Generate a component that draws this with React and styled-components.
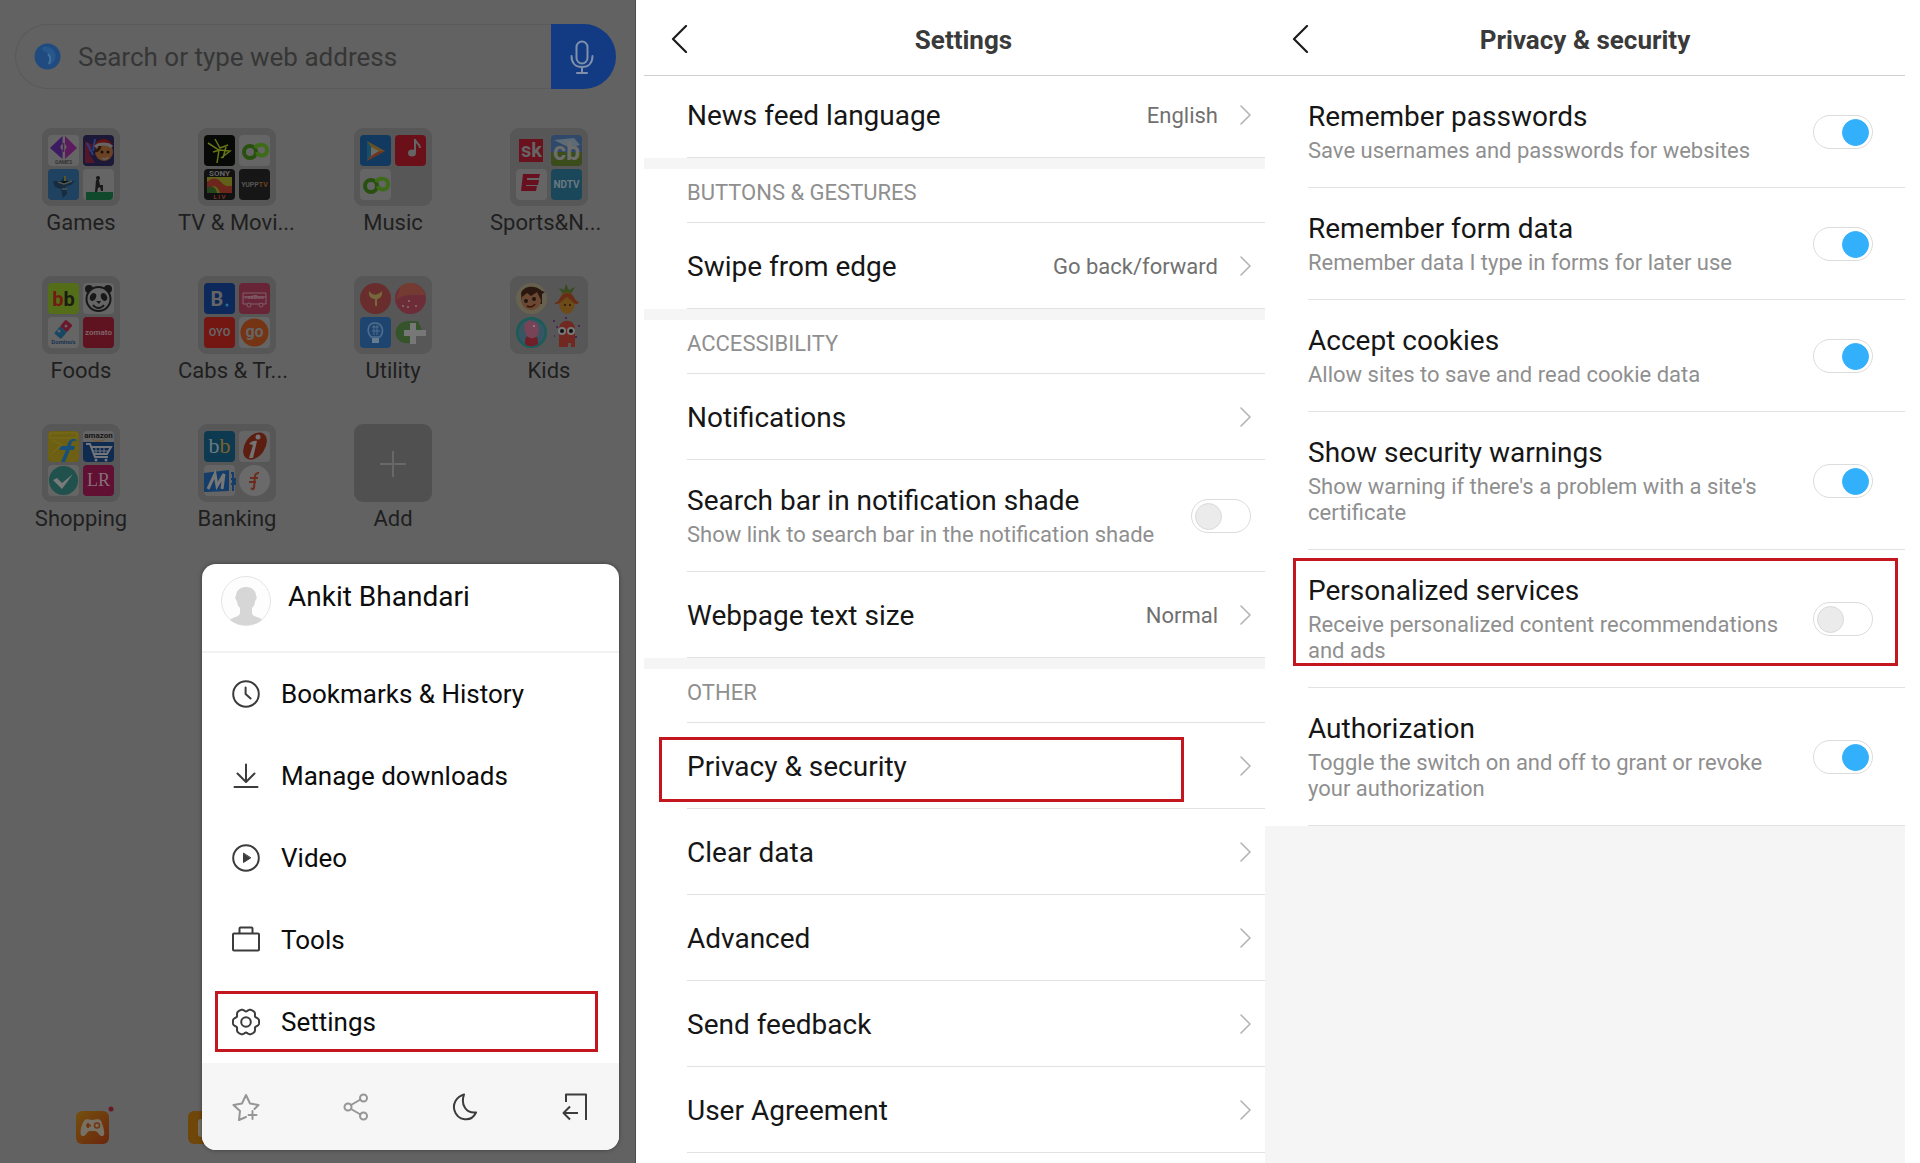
import { useState } from "react";
import styled, { createGlobalStyle, css } from "styled-components";

const GlobalStyle = createGlobalStyle`
  * {
    box-sizing: border-box;
  }

  body {
    margin: 0;
    background: #ffffff;
    font-family: Roboto, "Liberation Sans", sans-serif;
  }

  button, input {
    font-family: inherit;
  }

  button {
    border: none;
    padding: 0;
    background: transparent;
    cursor: pointer;
  }

  svg {
    display: block;
    flex-shrink: 0;
  }
`;

const Page = styled.main`
  display: grid;
  grid-template-columns: 636fr 629fr 640fr;
  min-height: 100vh;
  padding-right: 15px;
`;

/* a red frame drawn over the part that the reader should tap */
const marked = css`
  position: relative;

  &::after {
    content: "";
    position: absolute;
    inset: ${({ $mark }) => $mark};
    border: 3px solid #c4161f;
    pointer-events: none;
  }
`;

/* ---------- browser home ---------- */

const Home = styled.section`
  position: relative;
  display: flex;
  flex-direction: column;
  background: #626262;
  border-right: 1px solid #4c4c4c;
`;

const SearchBar = styled.form`
  display: flex;
  align-items: center;
  height: 65px;
  margin: 24px 19px 39px 15px;
  padding-left: 18px;
  border: 1px solid #5a5a5a;
  border-right: none;
  border-radius: 33px;
`;

const SearchInput = styled.input`
  flex: 1;
  min-width: 0;
  margin-left: 17px;
  padding: 0;
  border: none;
  outline: none;
  background: transparent;
  color: #2c2c2c;
  font-size: 26px;

  &::placeholder {
    color: #363636;
    opacity: 1;
  }
`;

const MicButton = styled.button`
  display: flex;
  align-items: center;
  justify-content: center;
  width: 65px;
  height: 65px;
  padding-right: 3px;
  background: #123b83;
  border-radius: 0 33px 33px 0;
`;

const FolderGrid = styled.div`
  display: grid;
  grid-template-columns: repeat(4, 1fr);
  row-gap: 38px;
  padding: 0 8px 0 3px;
`;

const Folder = styled.button`
  display: flex;
  flex-direction: column;
  align-items: center;
  gap: 2px;
  color: #1f1f1f;
  font-size: 22px;
  line-height: 30px;
`;

const FolderName = styled.span`
  width: 118px;
  text-align: ${({ $cut }) => ($cut ? "left" : "center")};
  white-space: nowrap;
`;

const Dock = styled.div`
  display: flex;
  gap: 71px;
  margin-top: auto;
  padding: 0 0 18px 76px;
`;

const Menu = styled.nav`
  position: absolute;
  right: 16px;
  bottom: 13px;
  width: 417px;
  overflow: hidden;
  border-radius: 14px;
  background: #ffffff;
  box-shadow: 0 0 4px rgba(0, 0, 0, 0.4);
`;

const Profile = styled.div`
  display: flex;
  align-items: flex-start;
  gap: 17px;
  height: 89px;
  padding: 12px 19px;
  border-bottom: 2px solid #f2f2f2;
  color: #0c0c0c;
  font-size: 28px;
  line-height: 42px;
`;

const MenuList = styled.div`
  display: flex;
  flex-direction: column;
`;

const MenuItem = styled.button`
  display: flex;
  align-items: center;
  gap: 21px;
  height: 82px;
  padding: 0 30px;
  color: #0c0c0c;
  font-size: 26px;
  text-align: left;
  ${({ $mark }) => $mark && marked}
`;

const MenuFooter = styled.div`
  display: flex;
  align-items: center;
  justify-content: space-between;
  height: 87px;
  padding: 0 30px;
  background: #f6f6f6;
`;

/* ---------- settings screens ---------- */

const Screen = styled.section`
  display: flex;
  flex-direction: column;
  padding-left: ${({ $inset }) => $inset || 0};
  background: ${({ $fill }) => $fill || "#ffffff"};
`;

const ScreenHeader = styled.header`
  position: relative;
  z-index: 1;
  display: grid;
  grid-template-columns: 48px 1fr ${({ $end }) => $end || "48px"};
  align-items: center;
  height: 76px;
  border-bottom: 1px solid #cfcfcf;
  background: #ffffff;
`;

const BackButton = styled.button`
  justify-self: end;
  padding: 2px 4px 0;
`;

const Title = styled.h1`
  margin: 0;
  padding-top: 4px;
  color: #3a3a3a;
  font-size: 26px;
  font-weight: 700;
  text-align: center;
`;

const Rows = styled.div`
  display: flex;
  flex-direction: column;
  margin-top: ${({ $scrolled }) => $scrolled || 0};
  padding-left: 43px;
  background: #ffffff;
`;

const rowStyle = css`
  display: flex;
  align-items: center;
  gap: 22px;
  min-height: 86px;
  border-bottom: 1px solid #e2e2e2;
  color: #161616;
  font-size: 28px;
  line-height: 34px;
  text-align: left;
  ${({ $mark }) => $mark && marked}
`;

const RowText = styled.span`
  display: flex;
  flex: 1;
  flex-direction: column;
  gap: 4px;
`;

const LinkRow = styled.button`
  ${rowStyle}
  padding-right: 14px;

  ${RowText} {
    padding-top: 2px;
  }
`;

const SwitchRow = styled.label`
  ${rowStyle}
  padding: 24px ${({ $end }) => $end || "14px"} 23px 0;
`;

const Hint = styled.span`
  color: #8f8f8f;
  font-size: 22px;
  line-height: 26px;
`;

const Value = styled.span`
  padding-top: 2px;
  color: #707070;
  font-size: 22px;
`;

const Divider = styled.div`
  height: 11px;
  background: #f5f5f5;
`;

const SectionTitle = styled.h2`
  height: 54px;
  margin: 0;
  border-bottom: 1px solid #e2e2e2;
  color: #8f8f8f;
  font-size: 22px;
  font-weight: 400;
  line-height: 48px;
`;

const Switch = styled.input`
  appearance: none;
  display: flex;
  align-items: center;
  flex-shrink: 0;
  width: 60px;
  height: 34px;
  margin: 0;
  padding: 0 3px;
  border: 1px solid #dcdcdc;
  border-radius: 17px;
  background: #ffffff;

  &::before {
    content: "";
    width: 25px;
    height: 25px;
    border: 1px solid #dadada;
    border-radius: 50%;
    background: #ebebeb;
  }

  &:checked::before {
    margin-left: auto;
    border-color: #33b0fc;
    background: #33b0fc;
  }
`;

const stroke = {
  fill: "none",
  stroke: "#3c3c3c",
  strokeWidth: 2,
  strokeLinecap: "round",
  strokeLinejoin: "round",
};

// six broad teeth with narrow dips between them
const gearPoints = Array.from({ length: 72 }, (_, i) => {
  const angle = (i * Math.PI) / 36;
  const radius = 12.2 + 1.3 * Math.cos(6 * angle) - 0.4 * Math.cos(12 * angle);
  return `${14 + radius * Math.cos(angle)},${14 + radius * Math.sin(angle)}`;
}).join(" ");

function Icon({ size = 28, children, ...props }) {
  return (
    <svg width={size} height={size} viewBox="0 0 28 28" {...stroke} {...props}>
      {children}
    </svg>
  );
}

function Chevron() {
  return (
    <svg width="11" height="20" viewBox="0 0 11 20" {...stroke} stroke="#b4b4b4" strokeWidth="1.6">
      <path d="M1 1l9 9-9 9" />
    </svg>
  );
}

function BackArrow() {
  return (
    <svg width="17" height="28" viewBox="0 0 17 28" {...stroke} stroke="#1c1c1c" strokeWidth="2.2">
      <path d="M15 1L2 14l13 13" />
    </svg>
  );
}

const menuItems = [
  {
    name: "Bookmarks & History",
    icon: (
      <Icon>
        <circle cx="14" cy="14" r="12.8" />
        <path d="M13.6 7.5V14l5 4.5" />
      </Icon>
    ),
  },
  {
    name: "Manage downloads",
    icon: (
      <Icon>
        <path d="M14 2.5V19M5.5 11.5L14 20l8.5-8.5M2.5 25h23" />
      </Icon>
    ),
  },
  {
    name: "Video",
    icon: (
      <Icon>
        <circle cx="14" cy="14" r="12.8" />
        <path d="M11.5 9.5v9l7-4.5z" fill="#3c3c3c" strokeWidth="1" />
      </Icon>
    ),
  },
  {
    name: "Tools",
    icon: (
      <Icon>
        <rect x="1" y="7.5" width="26" height="17" rx="1" />
        <path d="M7.5 7V2.5a1 1 0 0 1 1-1h11a1 1 0 0 1 1 1V7" />
      </Icon>
    ),
  },
  {
    name: "Settings",
    mark: "10px 21px 11px 13px",
    icon: (
      <Icon>
        <polygon points={gearPoints} />
        <circle cx="14" cy="14" r="4.8" />
      </Icon>
    ),
  },
];

/* ---------- folder artwork ---------- */

const light = "#656565";

function Tile({ x = 0, y = 0, fill = light, round, children }) {
  return (
    <g transform={`translate(${6 + x * 35} ${7 + y * 34})`}>
      {round ? (
        <circle cx="15.5" cy="15.5" r="15.5" fill={fill} />
      ) : (
        <rect width="31" height="31" rx="4" fill={fill} />
      )}
      {children}
    </g>
  );
}

function Word({ x = 15.5, y = 20, size = 10, fill = light, serif, children }) {
  return (
    <text
      x={x}
      y={y}
      fill={fill}
      fontSize={size}
      fontWeight={serif ? "400" : "700"}
      fontFamily={serif ? '"Liberation Serif", serif' : "Roboto, sans-serif"}
      textAnchor="middle"
    >
      {children}
    </text>
  );
}

function LoopLogo() {
  return (
    <g fill="none" strokeWidth="4">
      <circle cx="11" cy="17" r="6" stroke="#28510f" />
      <path d="M16 13c3-5 12-4 12 2 0 7-9 7-10 2" stroke="#3d6b17" />
      <path d="M10 14v6l4-3z" fill={light} stroke="none" />
    </g>
  );
}

const folders = [
  {
    name: "Games",
    art: (
      <>
        <Tile>
          <path d="M14.5 1v23L2 13z" fill="#3c1b63" />
          <path d="M17 1v23l12-11z" fill="#5d1a5d" />
          <circle cx="15.5" cy="12" r="3" fill={light} />
          <path d="M15.5 8v9" stroke="#4a2352" strokeWidth="1.5" />
          <Word y={29} size={5} fill="#333333">GAMES</Word>
        </Tile>
        <Tile x={1} fill="#1b1838">
          <path d="M2 6l8 4-4 8 6 10H2z" fill="#52182a" />
          <path d="M4 8l6 12M12 4l-2 12" stroke="#2f3a78" strokeWidth="2" />
          <circle cx="21" cy="17" r="9" fill="#6b4324" />
          <path d="M11 12C13 2 27 1 30 12l-9-2z" fill="#611313" />
          <path d="M12 12c4-4 13-4 17 0" stroke={light} strokeWidth="3" fill="none" />
          <path d="M12 16c3 0 5-3 5-5" stroke="#2b170c" strokeWidth="3" fill="none" />
          <circle cx="19" cy="17" r="1.5" fill="#17120e" />
          <circle cx="25" cy="17" r="1.5" fill="#17120e" />
          <path d="M19 23c3 2 5 1 6-1" stroke={light} strokeWidth="1.5" fill="none" />
        </Tile>
        <Tile y={1} fill="#1e4260">
          <path d="M5 12h8l3-4 3 4h8l-4 4-5 1 1 8-4 4-2-9-6-2z" fill="#172c3e" />
          <path d="M10 13l6 2 8-3M14 20h5" stroke="#4e5a56" strokeWidth="1.5" />
          <path d="M17 7v5" stroke="#5d5525" strokeWidth="2" />
        </Tile>
        <Tile x={1} y={1}>
          <path d="M3 23h27v4a4 4 0 0 1-4 4H3z" fill="#10492b" />
          <circle cx="15" cy="9" r="2" fill="#151515" />
          <path d="M13 11h3l1 5h3v6h-2l-1-4-2 1-1 4h-2z" fill="#191919" />
        </Tile>
      </>
    ),
  },
  {
    name: "TV & Movi...",
    cut: true,
    art: (
      <>
        <Tile fill="#070907">
          <path d="M11 4l5 9 8-3M4 8l11 7-2 13M15 15l11 1-9 7M9 17l7-2M22 12l-3 11" stroke="#697519" strokeWidth="1.5" fill="none" />
        </Tile>
        <Tile x={1}><LoopLogo /></Tile>
        <Tile y={1} fill="#111111">
          <Word y={7} size={8}>SONY</Word>
          <rect x="3" y="8" width="25" height="16" fill="#61611a" />
          <path d="M3 13c8-7 12-2 16 2 3 3 6 2 9 2v7H16c-2-7-6-9-13-4z" fill="#6c261c" />
          <path d="M3 19c6-3 9 0 10 5H3z" fill="#24441d" />
          <Word y={30} size={6} fill="#803322">L I V</Word>
        </Tile>
        <Tile x={1} y={1} fill="#161616">
          <Word y={18} size={7} fill="#555555">YUPP<tspan fill="#70421e">TV</tspan></Word>
        </Tile>
      </>
    ),
  },
  {
    name: "Music",
    art: (
      <>
        <Tile fill="#123a60">
          <path d="M7 6l18 10L7 26z" fill="#6a5125" />
          <path d="M7 6l7 10-7 10z" fill="#184e65" />
          <path d="M7 26l8-9 10-1z" fill="#713222" />
          <path d="M11 12l8 4-8 5z" fill="#6b6b65" />
        </Tile>
        <Tile x={1} fill="#6b1018">
          <ellipse cx="17" cy="18" rx="4" ry="3.5" fill={light} />
          <path d="M20 18V4c0 4 5 4 5 9" stroke={light} strokeWidth="2" fill="none" />
        </Tile>
        <Tile y={1}><LoopLogo /></Tile>
      </>
    ),
  },
  {
    name: "Sports&N...",
    cut: true,
    art: (
      <>
        <Tile fill="none">
          <rect x="3" y="4" width="24" height="23" fill="#6a111e" />
          <Word y={22} size={20}>sk</Word>
        </Tile>
        <Tile x={1} fill="#30486a">
          <path d="M0 17h31v10a4 4 0 0 1-4 4H4a4 4 0 0 1-4-4z" fill="#3b4d1b" />
          <path d="M3 5l20-2 6 7-10 3z" fill="#5d6b77" />
          <Word y={25} size={25} fill="#6d6d6b">cb</Word>
        </Tile>
        <Tile y={1}>
          <path d="M7 5h17l-1 4H11v2h12l-1 5H10v1h11l-1 5H5z" fill="#680f20" />
        </Tile>
        <Tile x={1} y={1} fill="#1b475b">
          <Word y={19} size={10} fill="#6a7880">NDTV</Word>
        </Tile>
      </>
    ),
  },
  {
    name: "Foods",
    art: (
      <>
        <Tile fill="#546d18">
          <Word y={23} size={20} fill="#721b13">b<tspan fill="#191e10">b</tspan></Word>
        </Tile>
        <Tile x={1}>
          <circle cx="6" cy="6" r="4" fill="#181818" />
          <circle cx="25" cy="6" r="4" fill="#181818" />
          <circle cx="15.5" cy="16" r="12" fill={light} stroke="#181818" strokeWidth="2" />
          <ellipse cx="10" cy="14" rx="3" ry="4" fill="#181818" transform="rotate(25 10 14)" />
          <ellipse cx="21" cy="14" rx="3" ry="4" fill="#181818" transform="rotate(-25 21 14)" />
          <path d="M13 18h5l-2 3z" fill="#181818" />
          <path d="M10 22c3 4 8 4 11 0" stroke="#181818" strokeWidth="2" fill="none" />
        </Tile>
        <Tile y={1}>
          <g transform="rotate(40 15 12)">
            <rect x="11" y="3" width="9" height="9" rx="1" fill="#6a172b" />
            <rect x="11" y="12" width="9" height="9" rx="1" fill="#174765" />
          </g>
          <circle cx="18" cy="9" r="1.5" fill={light} />
          <circle cx="11" cy="14" r="1.5" fill={light} />
          <Word y={27} size={6} fill="#173451">Domino&apos;s</Word>
        </Tile>
        <Tile x={1} y={1} fill="#5f1220">
          <Word y={18} size={8} fill="#806267">zomato</Word>
        </Tile>
      </>
    ),
  },
  {
    name: "Cabs & Tr...",
    cut: true,
    art: (
      <>
        <Tile fill="#0d285a">
          <Word x={13} y={23} size={20}>B</Word>
          <circle cx="23" cy="22" r="1.5" fill="#267096" />
        </Tile>
        <Tile x={1} fill="#682538">
          <path d="M4 10h23v11H4zM4 14h23" stroke="#806068" fill="none" />
          <circle cx="10" cy="22" r="2" fill="#682538" stroke="#806068" />
          <circle cx="22" cy="22" r="2" fill="#682538" stroke="#806068" />
          <Word y={16} size={6} fill="#806068">redBus</Word>
        </Tile>
        <Tile y={1} fill="#741713">
          <Word y={19} size={11}>OYO</Word>
        </Tile>
        <Tile x={1} y={1}>
          <circle cx="15.5" cy="15.5" r="14" fill="#753414" />
          <Word y={20} size={16}>go</Word>
        </Tile>
      </>
    ),
  },
  {
    name: "Utility",
    art: (
      <>
        <Tile round fill="#692d2d">
          <path d="M9 8c4 5 8 5 13 0 1 6-3 8-5 8v7h-2v-7c-3 0-7-2-6-8z" fill="#74683c" />
        </Tile>
        <Tile x={1} round fill="#6c2d39">
          <path d="M1 17c9-7 20-5 29-5a15 15 0 0 0-25-8z" fill="#7a4431" opacity="0.6" />
          <circle cx="14" cy="18" r="1" fill="#8a7272" />
          <circle cx="8" cy="23" r="1" fill="#8a7272" />
          <circle cx="21" cy="23" r="1" fill="#8a7272" />
          <circle cx="13" cy="24" r="1" fill="#8a7272" />
        </Tile>
        <Tile y={1} fill="#1e4570">
          <path d="M11 20c-5-6-3-14 4-14s10 8 5 14z" fill="none" stroke="#506f8d" strokeWidth="1.5" />
          <path d="M12 10h7M12 14h8M14 8v10M17 8v10" stroke="#506f8d" />
          <path d="M12 21h7v5h-7z" fill="#657b8e" />
        </Tile>
        <Tile x={1} y={1} fill="none">
          <path d="M16 4v22C-5 29-4 2 16 4z" fill="#36542b" />
          <path d="M16 4h7l4 9H14z" fill="#36542b" />
          <path d="M15 6h6v7h10v6H21v8h-6v-8H9v-6h6z" fill="#777777" />
        </Tile>
      </>
    ),
  },
  {
    name: "Kids",
    art: (
      <>
        <Tile round fill="#67614f">
          <path d="M5 10C8 2 20 2 26 8l3 1-3 2v10H6z" fill="#2a170f" />
          <path d="M6 14l5-4 4 3 6-4 4 8c0 12-15 13-19 4z" fill="#6c4833" />
          <circle cx="10" cy="18" r="2" fill="#211710" />
          <circle cx="18" cy="16" r="2" fill="#211710" />
          <path d="M11 23c4 2 7 0 8-2" stroke="#32150d" strokeWidth="1.5" fill="none" />
        </Tile>
        <Tile x={1} fill="none">
          <path d="M12 11L8 5l5 2 2-6 3 6 6-3-4 7z" fill="#374c20" />
          <ellipse cx="16" cy="20" rx="8" ry="11" fill="#6c4b19" />
          <path d="M3 20c6 0 6-10 13-10 8 0 7 9 12 9-3 6-8-3-12-5-4 2-9 10-13 6z" fill="#682d16" />
          <circle cx="14" cy="22" r="1" fill="#22170d" />
          <circle cx="19" cy="22" r="1" fill="#22170d" />
        </Tile>
        <Tile y={1} round fill="#1b5b58">
          <circle cx="15.5" cy="15.5" r="13" fill="#365663" />
          <path d="M9 24c0-8 13-8 13 0v3c-4 3-9 3-13 0z" fill="#701f29" />
          <path d="M9 15c-2-7 1-12 2-9 2-5 5-3 4-1 8-2 9 7 7 13-4 5-11 4-13-3z" fill="#774457" />
          <circle cx="18" cy="9" r="1" fill="#a08a92" />
        </Tile>
        <Tile x={1} y={1} fill="none">
          <path d="M8 30V12c0-11 16-11 16 0v18h-4v-4h-3v4z" fill="#712821" />
          <circle cx="11" cy="14" r="4" fill="#777777" />
          <circle cx="20" cy="14" r="4" fill="#777777" />
          <circle cx="11" cy="14" r="2" fill="#111111" />
          <circle cx="20" cy="14" r="2" fill="#111111" />
          <path d="M2 4h2M27 9h2M24 20h2M3 19h1M14 1h2M5 10h2" stroke="#4a2459" strokeWidth="2" />
        </Tile>
      </>
    ),
  },
  {
    name: "Shopping",
    art: (
      <>
        <Tile fill="#6e6012">
          <path d="M2 2h27v5H2zM4 9l10 5-10 8" stroke="#7b6d1d" fill="none" />
          <path d="M13 31l5-12h-7l2-4h6c2-8 8-9 10-5-4-1-6 1-6 5h4l-1 4h-4l-5 12z" fill="#17507a" />
        </Tile>
        <Tile x={1}>
          <path d="M0 11h31v16a4 4 0 0 1-4 4H4a4 4 0 0 1-4-4z" fill="#102b50" />
          <Word y={7} size={8} fill="#141414">amazon</Word>
          <path d="M9 8c4 3 9 3 13 0" stroke="#795321" fill="none" />
          <path d="M3 13h4l5 13h13M8 16h20l-4 7H11" stroke="#73777c" strokeWidth="2" fill="none" />
          <path d="M13 17v6M17 17v6M21 17v6M9 20h17" stroke="#73777c" />
          <circle cx="13" cy="29" r="1.5" fill="#73777c" />
          <circle cx="23" cy="29" r="1.5" fill="#73777c" />
        </Tile>
        <Tile y={1}>
          <circle cx="15.5" cy="15.5" r="14.5" fill="#20514c" />
          <path d="M5 15l4-2 5 5L25 9l-11 15z" fill="#7a7a7a" />
        </Tile>
        <Tile x={1} y={1} fill="#610f32">
          <Word y={21} size={18} fill="#86707a" serif>LR</Word>
        </Tile>
      </>
    ),
  },
  {
    name: "Banking",
    art: (
      <>
        <Tile fill="#0d3a51">
          <Word y={22} size={22} fill="#6b7b83" serif>b<tspan fill="#7a622a">b</tspan></Word>
        </Tile>
        <Tile x={1}>
          <ellipse cx="16" cy="15" rx="10" ry="15" fill="#5d1e12" transform="rotate(35 16 15)" />
          <path d="M10 13c2-3 6-4 8-3l-4 17h-4l4-13z" fill="#747474" />
          <circle cx="19" cy="6" r="2.5" fill="#747474" />
        </Tile>
        <Tile y={1}>
          <path d="M0 8l25-3v21L0 27z" fill="#143d6a" />
          <path d="M27 8h2v18M27 14h4v5h-4" stroke="#143d6a" strokeWidth="2" fill="none" />
          <path d="M4 24L11 9l2 12 7-12-2 15" stroke="#777777" strokeWidth="3" fill="none" />
        </Tile>
        <Tile x={1} y={1} round fill="#6a6a6a">
          <path d="M20 8c-5-1-4 5-5 15-1 2-2 1-3 0M11 13h8M10 17h7" stroke="#6e2a1c" strokeWidth="2" fill="none" />
        </Tile>
      </>
    ),
  },
  {
    name: "Add",
    add: true,
    art: <path d="M39 27v26M26 40h26" stroke="#686868" strokeWidth="2" />,
  },
];

function FolderArt({ add, children }) {
  return (
    <svg width="78" height="78" viewBox="0 0 78 78" aria-hidden="true">
      <rect width="78" height="78" rx="9" fill={add ? "#505050" : "#575757"} />
      {children}
    </svg>
  );
}

function HomeScreen() {
  return (
    <Home>
      <SearchBar onSubmit={(event) => event.preventDefault()}>
        <svg width="27" height="27" viewBox="0 0 27 27" aria-hidden="true">
          <circle cx="13.5" cy="13.5" r="13" fill="#204b80" />
          <path d="M9 4c9-2 16 7 11 14-2 3-5 4-7 3 4-5 4-8 0-11-3-2-6-2-4-6z" fill="#28588b" />
          <path d="M14 11c3 3 3 6 1 10" stroke="#41709a" strokeWidth="2" fill="none" />
        </svg>
        <SearchInput
          type="search"
          aria-label="Search or type web address"
          placeholder="Search or type web address"
        />
        <MicButton type="button" aria-label="Voice search">
          <svg width="24" height="34" viewBox="0 0 24 34" {...stroke} stroke="#8090ab">
            <rect x="6.5" y="1.5" width="11" height="22" rx="5.5" />
            <path d="M1.500 16c0 7 4 11 10.500 11s10.500-4 10.500-11M12 27v6M7 33h10" />
          </svg>
        </MicButton>
      </SearchBar>
      <FolderGrid>
        {folders.map((folder) => (
          <Folder key={folder.name}>
            <FolderArt add={folder.add}>{folder.art}</FolderArt>
            <FolderName $cut={folder.cut}>{folder.name}</FolderName>
          </Folder>
        ))}
      </FolderGrid>
      <Dock>
        <svg width="41" height="39" viewBox="0 0 41 39" aria-hidden="true">
          <defs>
            <linearGradient id="pad" x1="0" y1="0" x2="1" y2="1">
              <stop offset="0" stopColor="#75500d" />
              <stop offset="1" stopColor="#6b260d" />
            </linearGradient>
          </defs>
          <rect y="5" width="33" height="33" rx="6" fill="url(#pad)" />
          <path d="M8 15c2-3 5-1 8-1s7-2 9 1c2 4 5 14 2 15-4 1-5-5-8-5h-5c-3 0-4 6-8 5-3-1-1-11 2-15z" fill="#777064" />
          <path d="M12 17v5M10 19.500h5" stroke="#70350d" strokeWidth="2" />
          <circle cx="21" cy="19.500" r="2.500" fill="none" stroke="#70350d" strokeWidth="1.500" />
          <circle cx="35" cy="3" r="2.500" fill="#671a23" />
        </svg>
        <svg width="33" height="39" viewBox="0 0 33 39" aria-hidden="true">
          <rect y="5" width="33" height="33" rx="6" fill="#70470b" />
          <rect x="10" y="13" width="14" height="18" rx="3" fill="#777064" />
        </svg>
      </Dock>
      <Menu>
        <Profile>
          <svg width="50" height="50" viewBox="0 0 50 50" aria-hidden="true">
            <circle cx="25" cy="25" r="24.5" fill="#fdfdfd" stroke="#e4e4e4" />
            <path d="M9 44c2-3 10-3 10-7v-5c-2-2-3-4-3-7-2-1-2-5-1-5 0-12 20-12 20 0 1 0 1 4-1 5 0 3-1 5-3 7v5c0 4 8 4 10 7-8 7-24 7-32 0z" fill="#d6d6d6" />
          </svg>
          Ankit Bhandari
        </Profile>
        <MenuList>
          {menuItems.map((item) => (
            <MenuItem key={item.name} $mark={item.mark}>
              {item.icon}
              {item.name}
            </MenuItem>
          ))}
        </MenuList>
        <MenuFooter>
          <button aria-label="Add to bookmarks">
            <Icon stroke="#969696">
              <path d="M14 24l-7 3 1-9-6.500-6 8.500-1.500L14 2l4 8.500 8.500 1.500-4 4M20.500 18v8M16.500 22h8" />
            </Icon>
          </button>
          <button aria-label="Share">
            <Icon stroke="#969696">
              <circle cx="21.500" cy="5" r="3.500" />
              <circle cx="6" cy="14" r="3.500" />
              <circle cx="21.500" cy="23" r="3.500" />
              <path d="M9 12l9.500-5.500M9 16l9.500 5.500" />
            </Icon>
          </button>
          <button aria-label="Night mode">
            <Icon>
              <path d="M13 1.500C5 4 1.500 11 3.500 17.500 6.500 27.500 20 30 25 19.500 15 20.500 9.500 12 13 1.500z" />
            </Icon>
          </button>
          <button aria-label="Exit">
            <Icon strokeLinecap="butt">
              <path d="M5 9V1.500h20V27M17 20H3M9 13.500L2.500 20 9 26.500" />
            </Icon>
          </button>
        </MenuFooter>
      </Menu>
    </Home>
  );
}

function LinkItem({ name, value, mark }) {
  return (
    <LinkRow $mark={mark}>
      <RowText>{name}</RowText>
      {value && <Value>{value}</Value>}
      <Chevron />
    </LinkRow>
  );
}

function SwitchItem({ name, hint, on, end, mark }) {
  const [checked, setChecked] = useState(Boolean(on));

  return (
    <SwitchRow $end={end} $mark={mark}>
      <RowText>
        {name}
        <Hint>{hint}</Hint>
      </RowText>
      <Switch
        type="checkbox"
        checked={checked}
        onChange={() => setChecked(!checked)}
      />
    </SwitchRow>
  );
}

function SettingsScreen() {
  return (
    <Screen $inset="8px">
      <ScreenHeader $end="30px">
        <BackButton aria-label="Back">
          <BackArrow />
        </BackButton>
        <Title>Settings</Title>
      </ScreenHeader>
      <Rows $scrolled="-4px">
        <LinkItem name="News feed language" value="English" />
      </Rows>
      <Divider />
      <Rows>
        <SectionTitle>BUTTONS & GESTURES</SectionTitle>
        <LinkItem name="Swipe from edge" value="Go back/forward" />
      </Rows>
      <Divider />
      <Rows>
        <SectionTitle>ACCESSIBILITY</SectionTitle>
        <LinkItem name="Notifications" />
        <SwitchItem
          name="Search bar in notification shade"
          hint="Show link to search bar in the notification shade"
        />
        <LinkItem name="Webpage text size" value="Normal" />
      </Rows>
      <Divider />
      <Rows>
        <SectionTitle>OTHER</SectionTitle>
        <LinkItem name="Privacy & security" mark="14px 81px 6px -28px" />
        <LinkItem name="Clear data" />
        <LinkItem name="Advanced" />
        <LinkItem name="Send feedback" />
        <LinkItem name="User Agreement" />
      </Rows>
    </Screen>
  );
}

const privacyItems = [
  {
    name: "Remember passwords",
    hint: "Save usernames and passwords for websites",
    on: true,
  },
  {
    name: "Remember form data",
    hint: "Remember data I type in forms for later use",
    on: true,
  },
  {
    name: "Accept cookies",
    hint: "Allow sites to save and read cookie data",
    on: true,
  },
  {
    name: "Show security warnings",
    hint: "Show warning if there's a problem with a site's certificate",
    on: true,
  },
  {
    name: "Personalized services",
    hint: "Receive personalized content recommendations and ads",
    mark: "8px 7px 21px -15px",
  },
  {
    name: "Authorization",
    hint: "Toggle the switch on and off to grant or revoke your authorization",
    on: true,
  },
];

function PrivacyScreen() {
  return (
    <Screen $fill="#f5f5f5">
      <ScreenHeader>
        <BackButton aria-label="Back">
          <BackArrow />
        </BackButton>
        <Title>Privacy & security</Title>
      </ScreenHeader>
      <Rows>
        {privacyItems.map((item) => (
          <SwitchItem key={item.name} end="32px" {...item} />
        ))}
      </Rows>
    </Screen>
  );
}

export default function App() {
  return (
    <>
      <GlobalStyle />
      <Page>
        <HomeScreen />
        <SettingsScreen />
        <PrivacyScreen />
      </Page>
    </>
  );
}
